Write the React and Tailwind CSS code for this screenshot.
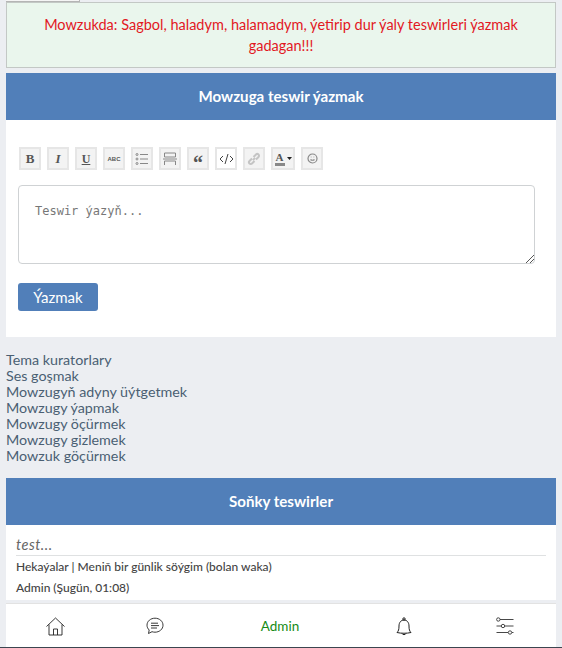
const LINKS = [
  'Tema kuratorlary',
  'Ses goşmak',
  'Mowzugyň adyny üýtgetmek',
  'Mowzugy ýapmak',
  'Mowzugy öçürmek',
  'Mowzugy gizlemek',
  'Mowzuk göçürmek',
];

function ToolButton({ className = 'w-[22px] bg-[#f3f3f3]', children }) {
  return (
    <div className={`h-[23px] ${className} shrink-0 flex items-center justify-center border-2 border-[#e6e6e6] text-[#555]`}>
      {children}
    </div>
  );
}

function Toolbar() {
  return (
    <div className="flex items-center gap-[6px] ml-[1px]">
      <ToolButton><span className="font-['Liberation_Serif',serif] font-bold text-[13px] leading-none">B</span></ToolButton>
      <ToolButton><span className="font-['Liberation_Serif',serif] italic font-bold text-[13px] leading-none">I</span></ToolButton>
      <ToolButton><span className="font-['Liberation_Serif',serif] font-bold text-[12px] leading-none underline">U</span></ToolButton>
      <ToolButton><span className="font-['Liberation_Sans',sans-serif] font-bold text-[6px] leading-none">ABC</span></ToolButton>
      <ToolButton>
        <svg width="14" height="14" viewBox="0 0 14 14" fill="none" stroke="#888" strokeWidth="1">
          <path d="M5 2.500h8M5 7h8M5 11.500h8" />
          <circle cx="2" cy="2.500" r="1" />
          <circle cx="2" cy="7" r="1" />
          <circle cx="2" cy="11.500" r="1" />
        </svg>
      </ToolButton>
      <ToolButton>
        <svg width="14" height="14" viewBox="0 0 14 14" fill="none" stroke="#888" strokeWidth="1">
          <path d="M1.500 1h11v4h-11zM0 7h14M1.500 13V9h11v4" />
        </svg>
      </ToolButton>
      <ToolButton>
        <span className="font-['Liberation_Serif',serif] font-bold text-[20px] leading-none mt-[9px]">“</span>
      </ToolButton>
      <ToolButton className="w-[22px] bg-white">
        <svg width="15" height="12" viewBox="0 0 15 12" fill="none" stroke="#444" strokeWidth="1">
          <path d="M4 3 1 6l3 3M11 3l3 3-3 3M9 1 6 11" />
        </svg>
      </ToolButton>
      <ToolButton>
        <svg width="14" height="14" viewBox="0 0 14 14" fill="none" stroke="#c4c4c4" strokeWidth="2">
          <path d="M6 8 8 6M5 6.500 2.500 9a1.600 1.600 0 0 0 2.500 2.500L7.500 9M6.500 5 9 2.500A1.600 1.600 0 0 1 11.500 5L9 7.500" />
        </svg>
      </ToolButton>
      <ToolButton className="w-[24px] gap-[2px] bg-[#f3f3f3]">
        <span className="flex flex-col items-center">
          <span className="font-['Liberation_Serif',serif] font-bold text-[11px] leading-[10px]">A</span>
          <span className="w-[10px] h-[3px] mt-[1px] bg-[#888]" />
        </span>
        <svg width="5" height="3" viewBox="0 0 5 3"><path d="M0 0h5L2.500 3z" fill="#222" /></svg>
      </ToolButton>
      <ToolButton>
        <svg width="11" height="11" viewBox="0 0 11 11" fill="none" stroke="#888" strokeWidth="1.200">
          <circle cx="5.500" cy="5.500" r="4.500" />
          <path d="M3.500 6.500c1 1 3 1 4 0M3.800 4h.6M6.600 4h.6" />
        </svg>
      </ToolButton>
    </div>
  );
}

function SectionHeader({ title }) {
  return (
    <div className="h-[47px] flex items-center justify-center bg-[#517fb9] text-white font-bold text-[15.100px]">
      {title}
    </div>
  );
}

export default function App() {
  return (
    <div className="h-[648px] overflow-hidden border-b border-[#3c4650] bg-[#eceef2] px-[6px] font-['Lato',sans-serif]">
      <div className="w-[74px] h-[2px] border-r border-b border-[#b5b5b5] bg-[#f5f5f5]" />

      <div className="h-[66px] mb-[5px] flex items-center justify-center px-[16px] border border-[#c3c8c5] bg-[#eaf6ed] text-center text-[14.500px] leading-[21px] text-[#e2181f]">
        Mowzukda: Sagbol, haladym, halamadym, ýetirip dur ýaly teswirleri ýazmak gadagan!!!
      </div>

      <SectionHeader title="Mowzuga teswir ýazmak" />
      <div className="h-[217px] bg-white px-[12px] pt-[27px]">
        <Toolbar />
        <div className="relative mt-[15px] w-[517px] h-[79px] rounded-[4px] border border-[#cfd2d4] px-[16px] pt-[16px] font-['DejaVu_Sans_Mono',monospace] text-[12px] text-[#777]">
          Teswir ýazyň...
          <svg className="absolute right-0 bottom-0" width="10" height="10" viewBox="0 0 10 10" stroke="#555" strokeWidth="1">
            <path d="M2 10 10 2M6 10l4-4" />
          </svg>
        </div>
        <button className="mt-[19px] block w-[80px] h-[28px] rounded-[3px] bg-[#517fb9] text-white text-[15px] leading-none">
          Ýazmak
        </button>
      </div>

      <div className="pt-[15px] pb-[14px] text-[14.300px] leading-[16px] text-[#4a5f72]">
        {LINKS.map((link) => (
          <div key={link}>{link}</div>
        ))}
      </div>

      <SectionHeader title="Soňky teswirler" />
      <div className="h-[75px] bg-white px-[10px] text-[#444]">
        <div className="h-[31px] pt-[10px] border-b border-[#dfe1e2] text-[14.500px] leading-[19px] italic tracking-[0.5px] text-[#666]">test...</div>
        <div className="text-[12px] leading-[21px] font-medium">Hekaýalar | Meniň bir günlik söýgim (bolan waka)</div>
        <div className="text-[12px] leading-[21px] font-medium">Admin (Şugün, 01:08)</div>
      </div>

      <div className="mt-[3px] h-[45px] border-t border-[#e2e2e2] bg-white grid grid-cols-[98px_102px_148px_100px_102px] items-center justify-items-center">
        <svg width="19" height="19" viewBox="0 0 19 19" fill="none" stroke="#222" strokeWidth="0.900">
          <path d="M.5 9.500 9.500 1l9 8.500M3 7.500V18h13V7.500M7.500 18v-6h4v6" />
        </svg>
        <svg width="18" height="18" viewBox="0 0 18 18" fill="none" stroke="#222" strokeWidth="0.900">
          <path d="M9 1.200c4.400 0 8 3 8 7s-3.600 7-8 7c-1 0-2-.2-3-.5L2.500 16.500l.7-3.500C1.800 11.700 1 10 1 8.200c0-4 3.600-7 8-7z" />
          <path d="M5 6.200h7M5 8.600h8M5 11h6" />
        </svg>
        <span className="text-[13.500px] text-[#168c16]">Admin</span>
        <svg width="16" height="19" viewBox="0 0 16 19" fill="none" stroke="#222" strokeWidth="1">
          <path d="M1 15.500c1.500-1.500 2-3 2-6.500s2-6 5-6 5 2.500 5 6 .5 5 2 6.500c-4 1-10 1-14 0z" />
          <circle cx="8" cy="2" r="1.200" />
          <path d="M6 16.500c.5 1.500 3.500 1.500 4 0" />
        </svg>
        <svg width="18" height="18" viewBox="0 0 18 18" fill="none" stroke="#333" strokeWidth="0.900">
          <path d="M4 2.500h13.500M.5 9H5M9 9h8.500M.5 15.500H12M16 15.500h1.500" />
          <circle cx="2.300" cy="2.500" r="1.700" />
          <circle cx="7" cy="9" r="1.700" />
          <circle cx="14" cy="15.500" r="1.700" />
        </svg>
      </div>
    </div>
  );
}
